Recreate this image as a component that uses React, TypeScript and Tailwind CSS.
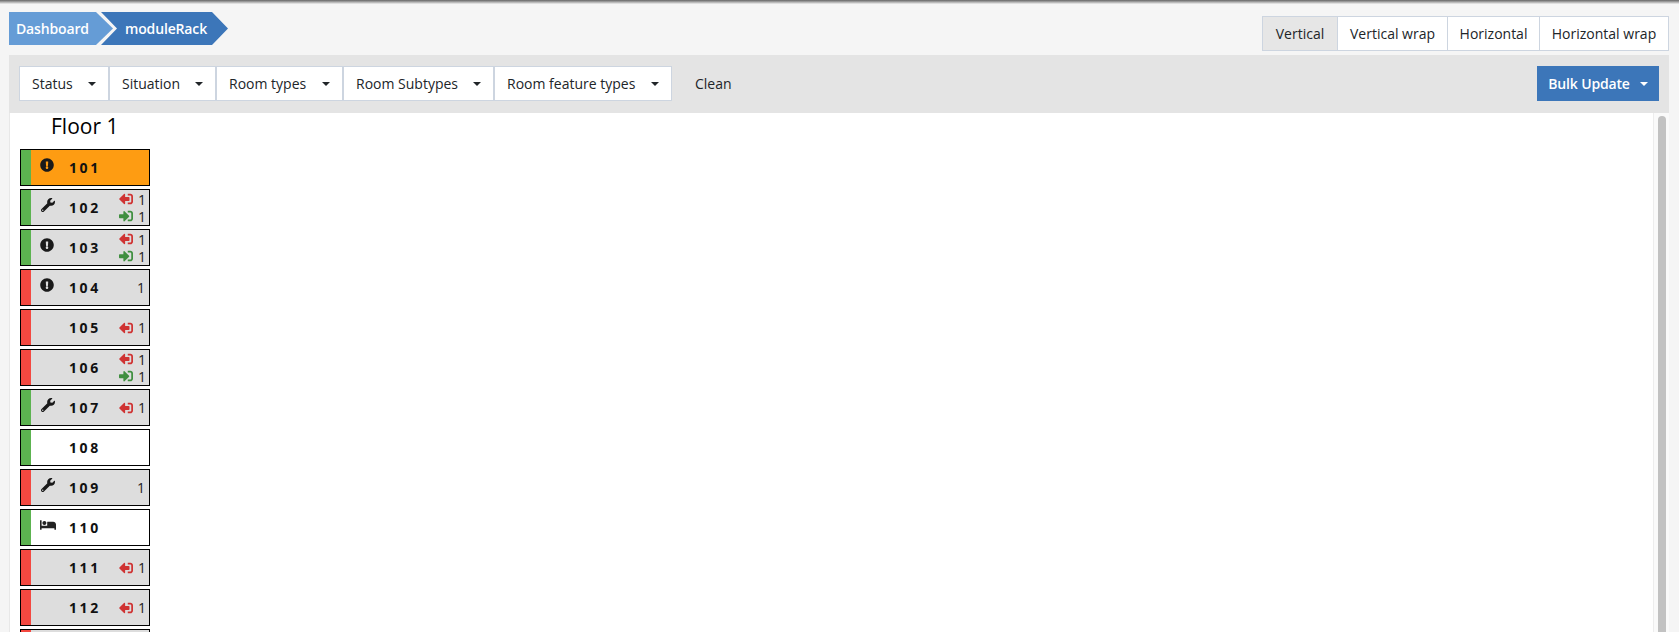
import { FaBed, FaExclamationCircle, FaSignInAlt, FaSignOutAlt, FaWrench } from "react-icons/fa";

type Room = {
  number?: number;
  ok: boolean;
  icon?: "alert" | "wrench" | "bed";
  bg: "orange" | "gray" | "white";
  out?: boolean;
  in?: boolean;
  plain?: boolean;
};

const rooms: Room[] = [
  { number: 101, ok: true, icon: "alert", bg: "orange" },
  { number: 102, ok: true, icon: "wrench", bg: "gray", out: true, in: true },
  { number: 103, ok: true, icon: "alert", bg: "gray", out: true, in: true },
  { number: 104, ok: false, icon: "alert", bg: "gray", plain: true },
  { number: 105, ok: false, bg: "gray", out: true },
  { number: 106, ok: false, bg: "gray", out: true, in: true },
  { number: 107, ok: true, icon: "wrench", bg: "gray", out: true },
  { number: 108, ok: true, bg: "white" },
  { number: 109, ok: false, icon: "wrench", bg: "gray", plain: true },
  { number: 110, ok: true, icon: "bed", bg: "white" },
  { number: 111, ok: false, bg: "gray", out: true },
  { number: 112, ok: false, bg: "gray", out: true },
  { ok: false, bg: "gray" },
];

const filters = [
  { label: "Status", width: "w-[90px]" },
  { label: "Situation", width: "w-[107px]" },
  { label: "Room types", width: "w-[127px]" },
  { label: "Room Subtypes", width: "w-[151px]" },
  { label: "Room feature types", width: "w-[178px]" },
];

const views = [
  { label: "Vertical", width: "w-[74px]", active: true },
  { label: "Vertical wrap", width: "w-[110px]" },
  { label: "Horizontal", width: "w-[92px]" },
  { label: "Horizontal wrap", width: "w-[129px]" },
];

function Caret() {
  return <span className="h-0 w-0 border-x-[4px] border-t-[4px] border-x-transparent border-t-[#212529]" />;
}

function RoomIcon({ icon }: { icon: Room["icon"] }) {
  if (icon === "alert") return <FaExclamationCircle className="mt-[-6px] ml-[9px] text-[14px] text-[#1a1a1a]" />;
  if (icon === "wrench") return <FaWrench className="mt-[-6px] ml-[10px] text-[14px] text-[#1a1a1a]" />;
  if (icon === "bed") return <FaBed className="mt-[-6px] ml-[9px] text-[16px] text-[#222]" />;
  return null;
}

function RoomRow({ room }: { room: Room }) {
  const bg = room.bg === "orange" ? "bg-[#fe9c12]" : room.bg === "gray" ? "bg-[#dddddd]" : "bg-white";
  return (
    <div className={`flex h-[37px] w-[130px] shrink-0 border border-black ${bg}`}>
      <div className={`w-[10px] shrink-0 ${room.ok ? "bg-[#5cb350]" : "bg-[#f44840]"}`} />
      <div className="flex w-[38px] shrink-0 items-center">
        <RoomIcon icon={room.icon} />
      </div>
      <div className="flex w-[50px] shrink-0 items-center text-[14px] font-bold tracking-[2.6px] text-[#111]">
        {room.number}
      </div>
      <div className="flex flex-1 flex-col justify-center pr-[4px] text-[14px] leading-[17px] text-[#222]">
        {room.out && (
          <div className="flex items-center justify-end gap-[5px]">
            <FaSignOutAlt className="-scale-x-100 text-[14px] text-[#cf3333]" />
            <span>1</span>
          </div>
        )}
        {room.in && (
          <div className="flex items-center justify-end gap-[5px]">
            <FaSignInAlt className="text-[14px] text-[#3f8f3f]" />
            <span>1</span>
          </div>
        )}
        {room.plain && <div className="text-right">1</div>}
      </div>
    </div>
  );
}

export default function App() {
  return (
    <div className="flex h-screen flex-col overflow-hidden bg-[#f5f5f5] font-['Open_Sans',sans-serif] text-[14px] text-[#212529]">
      <div className="h-[4px] shrink-0 bg-gradient-to-b from-[#666] via-[#aaa] to-[#f0f0f0]" />

      <div className="flex h-[51px] shrink-0 items-start justify-between pr-[10px] pl-[9px]">
        <div className="mt-[8px] flex h-[33px] items-center font-semibold text-white">
          <div className="flex h-full w-[104px] items-center bg-[#659cd6] pl-[7px] tracking-[-0.15px] [clip-path:polygon(0_0,87px_0,104px_50%,87px_100%,0_100%)]">
            Dashboard
          </div>
          <div className="ml-[-12px] flex h-full w-[127px] items-center bg-[#3c76b9] pl-[24px] tracking-[-0.15px] [clip-path:polygon(0_0,111px_0,127px_50%,111px_100%,0_100%,16px_50%)]">
            moduleRack
          </div>
        </div>
        <div className="mt-[12px] flex h-[35px] border border-[#cdd5e0] bg-white">
          {views.map((view, i) => (
            <div
              key={view.label}
              className={`flex items-center justify-center ${view.width} ${i > 0 ? "border-l border-[#cdd5e0]" : ""} ${view.active ? "bg-[#e6e6e6]" : ""}`}
            >
              {view.label}
            </div>
          ))}
        </div>
      </div>

      <div className="mr-[10px] ml-[9px] flex min-h-0 flex-1 flex-col">
        <div className="flex h-[58px] shrink-0 items-center justify-between bg-[#e4e4e4] pr-[10px] pl-[10px] pb-[1px]">
          <div className="flex items-center">
            {filters.map((filter) => (
              <div
                key={filter.label}
                className={`flex h-[35px] items-center justify-between border border-[#cdd5e0] bg-white pr-[12px] pl-[12px] ${filter.width}`}
              >
                <span>{filter.label}</span>
                <Caret />
              </div>
            ))}
            <span className="ml-[23px]">Clean</span>
          </div>
          <div className="flex h-[35px] w-[122px] items-center justify-center gap-[10px] bg-[#3c76b9] font-semibold tracking-[-0.15px] text-white">
            <span>Bulk Update</span>
            <span className="h-0 w-0 border-x-[4px] border-t-[4px] border-x-transparent border-t-white" />
          </div>
        </div>

        <div className="flex min-h-0 flex-1 border-l border-[#e8e8e8]">
          <div className="min-h-0 flex-1 overflow-hidden bg-white pl-[10px]">
            <div className="h-[36px] pl-[31px] text-[21px] leading-[26px] text-black">Floor 1</div>
            <div className="flex flex-col gap-[3px]">
              {rooms.map((room, i) => (
                <RoomRow key={i} room={room} />
              ))}
            </div>
          </div>
          <div className="flex w-[16px] shrink-0 justify-center border-l border-[#ededed] bg-[#fafafa] pt-[3px]">
            <div className="h-[600px] w-[8px] rounded-full bg-[#c2c2c2]" />
          </div>
        </div>
      </div>
    </div>
  );
}
